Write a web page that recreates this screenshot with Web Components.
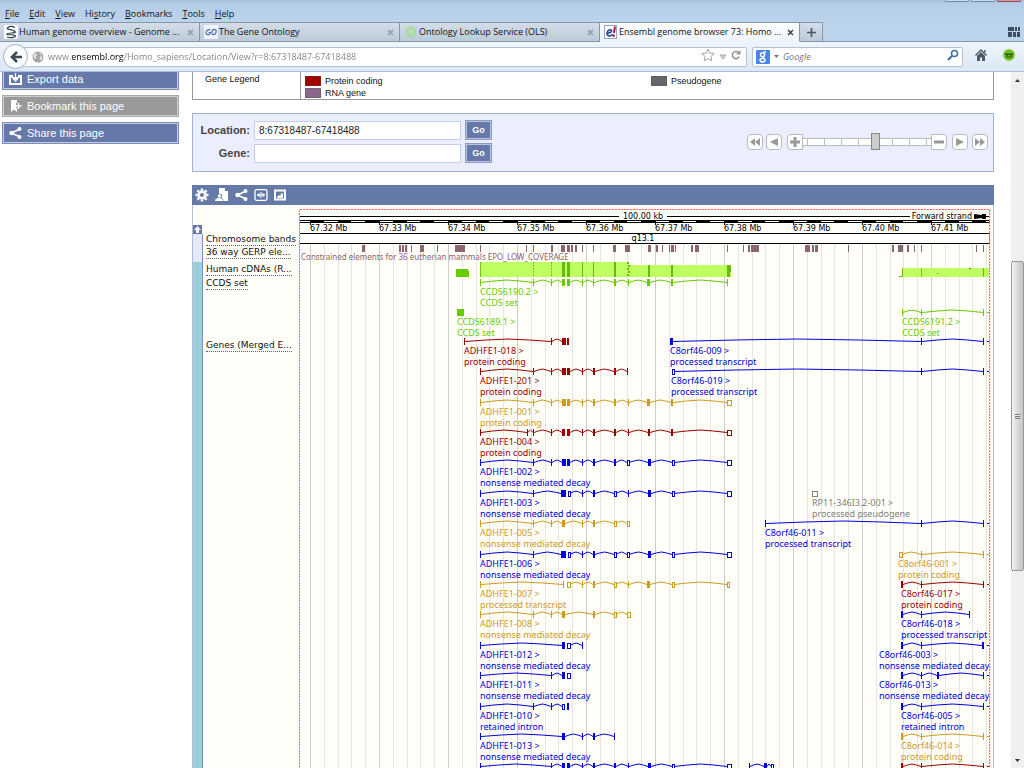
<!DOCTYPE html>
<html lang="en">
<head>
<meta charset="utf-8">
<title>Ensembl genome browser 73: Homo sapiens</title>
<style>
html,body{margin:0;height:100%;overflow:hidden;background:#fff;font-family:"Open Sans","Noto Sans",sans-serif}
</style>
</head>
<body>
<browser-window>
  <menu-bar slot="chrome"></menu-bar>
  <tab-strip slot="chrome">
    <browser-tab icon="genome">Human genome overview - Genome ...</browser-tab>
    <browser-tab icon="go">The Gene Ontology</browser-tab>
    <browser-tab icon="ols">Ontology Lookup Service (OLS)</browser-tab>
    <browser-tab icon="ensembl" active>Ensembl genome browser 73: Homo ...</browser-tab>
  </tab-strip>
  <nav-bar slot="chrome"></nav-bar>
  <ensembl-page></ensembl-page>
</browser-window>
<script>
const ICONS = {
  genome:'<svg viewBox="0 0 14 14" width="14" height="14"><rect width="14" height="14" rx="1" fill="#fff"/><path d="M11 2.500C8 1 5 1.500 3.500 3S9 4.500 11 6.500 4 7.500 3 9s6 0 8 1.500-4 3-8 1.500" fill="none" stroke="#2b3a4a" stroke-width="1.200"/></svg>',
  go:'<svg viewBox="0 0 14 14" width="14" height="14"><rect width="14" height="14" fill="#eef3fb"/><g fill="none" stroke="#4b6fae" stroke-width="1.200"><path d="M6.500 5C4 3.500 2 6 2 8c0 2 3 2 4 .8L6.300 7.500H4.500"/><ellipse cx="10" cy="7" rx="2" ry="2.700" transform="rotate(20 10 7)"/></g></svg>',
  ols:'<svg viewBox="0 0 14 14" width="14" height="14"><path d="M5 1h4v1.500L12 4v6l-3 1.500V13H5v-1.500L1.500 10V4L5 2.500z" fill="#a9d9a4"/><path d="M4 7h6M7 4v6" stroke="#c3e6bf"/></svg>',
  ensembl:'<svg viewBox="0 0 14 14" width="14" height="14"><rect x=".5" y=".5" width="12" height="13" fill="#fff" stroke="#99a6bb"/><path d="M3.500 8C6 8 8 7 7.500 5.300 7 4 3 5 3 8.500c0 3 4 3 6 .8" fill="none" stroke="#2c4f9a" stroke-width="1.700"/><path d="M11 1.500L10 8" stroke="#b01c3c" stroke-width="2"/><circle cx="9.800" cy="10.800" r="1.200" fill="#b01c3c"/></svg>',
  close:'<svg viewBox="0 0 7 7" width="7" height="7"><path d="M1 1l5 5M6 1L1 6" stroke="currentColor" stroke-width="1.300"/></svg>',
  plus:'<svg viewBox="0 0 9 9" width="9" height="9"><path d="M4.500 0v9M0 4.500h9" stroke="#4a5561" stroke-width="1.600"/></svg>',
  groups:'<svg viewBox="0 0 12 12" width="12" height="12"><path d="M0 1h6v4H0zM7 1h2v4H7zM10 1h2v4h-2zM0 6h4v5H0zM5 6h3v5H5zM9 6h3v5H9z" fill="#3e4e60"/></svg>',
  back:'<svg viewBox="0 0 14 14" width="14" height="14"><path d="M8 2L3 7l5 5M3 7h10" fill="none" stroke="#3f4a57" stroke-width="2.600"/></svg>',
  globe:'<svg viewBox="0 0 12 12" width="12" height="12"><circle cx="6" cy="6" r="5.500" fill="#a6a6a6"/><path d="M2 3c2-2 3 0 3 1S3 5 4 7 2 8 1.500 6zM7 2c3 0 3 2 2 3S7 8 8 9 10 8 10.500 6" fill="#e3e3e3"/></svg>',
  star:'<svg viewBox="0 0 14 14" width="14" height="14"><path d="M7 1l1.800 4.100 4.500.4-3.400 3 1 4.400L7 10.600 3.100 12.900l1-4.400-3.400-3 4.500-.4z" fill="#fff" stroke="#a5a5a5"/></svg>',
  tri:'<svg viewBox="0 0 8 6" width="8" height="6"><path d="M1 1h6L4 5z" fill="#d6d6d6" stroke="#aaa"/></svg>',
  reload:'<svg viewBox="0 0 10 10" width="10" height="10"><path d="M8.200 6.500A3.600 3.600 0 1 1 7.500 2.500" fill="none" stroke="#8d949b" stroke-width="1.500"/><path d="M9.500 0v4.500H5z" fill="#8d949b"/></svg>',
  google:'<svg viewBox="0 0 14 14" width="14" height="14"><rect width="14" height="14" rx="1" fill="#4a86e8"/><g fill="none" stroke="#fff" stroke-width="1.500"><circle cx="6.600" cy="4.700" r="2"/><path d="M7.600 2H10M7 7c0 1 2 1.200 2 3 0 2.500-5 2.500-5 .2C4 8.700 6 8.500 7.500 8.500"/></g></svg>',
  caret:'<svg viewBox="0 0 5 3" width="5" height="3"><path d="M0 0h5L2.500 3z" fill="#777"/></svg>',
  search:'<svg viewBox="0 0 12 12" width="12" height="12"><circle cx="7.500" cy="4.500" r="3" fill="none" stroke="#3d6ea5" stroke-width="1.500"/><path d="M5.200 6.800L1 11" stroke="#3d6ea5" stroke-width="2"/></svg>',
  home:'<svg viewBox="0 0 12 12" width="12" height="12"><path d="M6 0l6 6-1 1-5-5-5 5-1-1zM9 1h1.500v3L9 2.500zM2 7l4-4 4 4v5H7V8.500H5V12H2z" fill="#4b5866"/></svg>',
  monster:'<svg viewBox="0 0 12 12" width="12" height="12"><circle cx="6" cy="6" r="5.800" fill="#6fbd1c"/><g stroke="#1e3a0a" fill="none"><path d="M2 4.500l2 1.500 2-1 2 1 2-1.500M3 8.500l1.500-1L6 8.500l1.500-1L9 8.500"/></g><circle cx="4" cy="5.500" r="1" fill="#1e3a0a"/><circle cx="8" cy="5.500" r="1" fill="#1e3a0a"/></svg>',
  export:'<svg viewBox="0 0 13 12" width="13" height="12"><path d="M4 3H1v8h11V3H9" fill="none" stroke="#fff" stroke-width="2"/><path d="M6.500 0v5M3.500 4.500h6L6.500 8z" fill="#fff" stroke="#fff" stroke-width="1.200"/></svg>',
  bookmark:'<svg viewBox="0 0 13 12" width="13" height="12"><path d="M2 0h6v3H7v5h1v4L5 9.500 2 12z" fill="#fff"/><path d="M9.500 3v6M6.500 6h6" stroke="#fff" stroke-width="1.500"/></svg>',
  share:'<svg viewBox="0 0 13 12" width="13" height="12"><path d="M11 2L2.500 6 11 10" fill="none" stroke="#fff" stroke-width="1.600"/><circle cx="10.500" cy="2" r="2" fill="#fff"/><circle cx="2.500" cy="6" r="2.200" fill="#fff"/><circle cx="10.500" cy="10" r="2" fill="#fff"/></svg>',
  gear:'<svg viewBox="0 0 14 14" width="14" height="14"><circle cx="7" cy="7" r="3.400" fill="none" stroke="#fff" stroke-width="2.600"/><path d="M7 .5v2M7 11.500v2M.5 7h2M11.500 7h2M2.400 2.400l1.500 1.500M10.100 10.100l1.500 1.500M2.400 11.600l1.500-1.500M10.100 3.900l1.500-1.500" stroke="#fff" stroke-width="2.400"/></svg>',
  user:'<svg viewBox="0 0 14 14" width="14" height="14"><path d="M4 0h6l3 3v10H8.500c0-2-1-2.500-2-3 1.500-2 .5-4-1-4.200H4zM10 0v3h3" fill="#fff"/><circle cx="4.500" cy="8" r="1.800" fill="#fff"/><path d="M0 13c0-3 3-3 4.500-3S8 11 8 13z" fill="#fff"/></svg>',
  resize:'<svg viewBox="0 0 14 14" width="14" height="14"><rect x="1" y="1.700" width="12" height="10.600" rx="1.500" fill="none" stroke="#fff" stroke-width="1.300"/><path d="M7 4v6M3 7h8" stroke="#fff"/><path d="M3 7l2.500-2.200v4.400zM11 7L8.500 4.800v4.400z" fill="#fff"/></svg>',
  image:'<svg viewBox="0 0 12 12" width="12" height="12"><rect x="1" y="1.500" width="10" height="9" fill="none" stroke="#fff" stroke-width="2"/><path d="M3 8l2-2 1 1 1.500-3L9 5v4H3z" fill="#fff"/></svg>'
};
const define = (name, css, html, extra) => {
  const t = document.createElement('template');
  t.innerHTML = `<style>*{box-sizing:border-box}button{font:inherit;border:0;padding:0;background:none;color:inherit}${css}</style>${html}`;
  customElements.define(name, class extends HTMLElement {
    constructor(){ super(); this.attachShadow({mode:'open'}).append(t.content.cloneNode(true)); }
    connectedCallback(){ if (extra) extra(this, this.shadowRoot); }
  });
};
define('ui-icon', ':host{display:inline-flex;flex:none}svg{display:block}', '', (el, root) => {
  root.innerHTML = '<style>:host{display:inline-flex;flex:none}svg{display:block}</style>' + (ICONS[el.getAttribute('name')] || '');
});

define('menu-bar', `
:host{display:block;background:linear-gradient(#b3cde7,#bcd3ec)}
.title{display:flex;justify-content:flex-end;gap:2px;height:5px;padding-right:3px;background:linear-gradient(#a3bfdc,#b8d0ea)}
.title i{width:24px;height:2px;border:1px solid #7488a0;border-top:0;border-radius:0 0 3px 3px;background:#cfdeee}
.title i:last-child{background:#d9969a;border-color:#8b4b52}
nav{display:flex;gap:10px;height:17px;padding-left:5px;align-items:center;font-size:9px;line-height:16px;color:#111}
`, `<div class="title"><i></i><i></i><i></i></div>
<nav aria-label="Menu"><button><u>F</u>ile</button><button><u>E</u>dit</button><button><u>V</u>iew</button><button>Hi<u>s</u>tory</button><button><u>B</u>ookmarks</button><button><u>T</u>ools</button><button><u>H</u>elp</button></nav>`);

define('browser-tab', `
:host{display:flex;align-items:center;flex:0 1 200px;min-width:0;height:20px;padding:0 5px 0 4px;gap:1px;background:linear-gradient(#d2dde8,#bccad9);border:1px solid #8796a8;border-width:1px 1px 1px 0;font-size:9px;color:#111;box-sizing:border-box}
:host([active]){background:linear-gradient(#fdfeff,#eef4fb);border-bottom-color:#eef4fb}
.t{flex:1;text-align:left;display:flex;align-items:center;gap:1px;white-space:nowrap;overflow:hidden;line-height:16px}
.x{color:#8b97a4}:host([active]) .x{color:#333}
`, `<button class="t" role="tab"><ui-icon></ui-icon><span><slot></slot></span></button><button class="x" aria-label="Close tab"><ui-icon name="close"></ui-icon></button>`,
(el, root) => { const i = root.querySelector('ui-icon'); i.setAttribute('name', el.getAttribute('icon')); i.replaceWith(i.cloneNode()); });

define('tab-strip', `
:host{display:flex;height:20px;background:#bcd3ec;box-shadow:inset 0 -1px #8796a8}
.new{width:23px;background:linear-gradient(#d2dde8,#bccad9);border:1px solid #8796a8;border-left:0;display:flex;align-items:center;justify-content:center}
.all{margin-left:auto;padding-right:4px;display:flex;align-items:center}
`, `<slot></slot><button class="new" aria-label="New tab"><ui-icon name="plus"></ui-icon></button><button class="all" aria-label="Tab groups"><ui-icon name="groups"></ui-icon></button>`);

define('nav-bar', `
:host{display:flex;align-items:center;height:30px;background:linear-gradient(#eef4fb,#dce8f6);border-bottom:1px solid #a9bfd8;padding-left:3px;font-size:9px;box-sizing:border-box}
.back{width:25px;height:25px;border:1px solid #9fb0c3;border-radius:50%;background:#fbfdff;display:flex;align-items:center;justify-content:center;z-index:1}
.box{display:flex;align-items:center;height:20px;background:#fff;border:1px solid #b4c3d4;border-radius:2px}
.url{flex:1;margin-left:-6px;padding:0 5px 0 9px;gap:4px}
input{font:inherit;border:0;padding:0;outline:0;height:18px}
.url input{flex:1;min-width:0;background:linear-gradient(90deg,#808080 24px,#000 24px,#000 76px,#808080 76px);-webkit-background-clip:text;background-clip:text;color:transparent;-webkit-text-fill-color:transparent}
.find{flex:0 1 211px;margin-left:5px;padding:0 3px;gap:4px}
.find input{flex:1;min-width:0;font-style:italic}
.find input::placeholder{color:#777}
.home{margin-left:12px}.mon{margin:0 9px 0 16px}
`, `<button class="back" aria-label="Back"><ui-icon name="back"></ui-icon></button>
<div class="box url"><ui-icon name="globe"></ui-icon><input aria-label="Address" value="www.ensembl.org/Homo_sapiens/Location/View?r=8:67318487-67418488"><button aria-label="Bookmark"><ui-icon name="star"></ui-icon></button><button aria-label="History"><ui-icon name="tri"></ui-icon></button><button aria-label="Reload"><ui-icon name="reload"></ui-icon></button></div>
<div class="box find"><ui-icon name="google"></ui-icon><ui-icon name="caret"></ui-icon><input aria-label="Search" placeholder="Google"><button aria-label="Go"><ui-icon name="search"></ui-icon></button></div>
<button class="home" aria-label="Home"><ui-icon name="home"></ui-icon></button><button class="mon" aria-label="Add-on"><ui-icon name="monster"></ui-icon></button>`);

define('page-scrollbar', `
:host{display:flex;flex-direction:column;width:13px;flex:none;background:#f0f0f1}
.a{height:16px;flex:none;display:flex;align-items:center;justify-content:center}
.up{flex:174}.down{flex:182}
.thumb{flex:308;border:1px solid #979797;border-radius:2px;background:linear-gradient(90deg,#f4f4f4,#dadadb 50%,#c3c4c6);display:flex;align-items:center;justify-content:center}
.grip{width:5px;height:5px;border:solid #777;border-width:1px 0;box-shadow:inset 0 1px #e8e8e8,inset 0 2px #777}
svg{display:block}
`, `<div class="a"><svg width="5" height="3"><path d="M0 3h5L2.500 0z" fill="#333"/></svg></div><div class="up"></div><div class="thumb"><div class="grip"></div></div><div class="down"></div><div class="a"><svg width="5" height="3"><path d="M0 0h5L2.500 3z" fill="#333"/></svg></div>`);

define('browser-window', `
:host{display:flex;flex-direction:column;height:100vh;overflow:hidden}
.view{flex:1;min-height:0;display:flex}
main{flex:1;min-width:0;overflow:hidden}
`, `<slot name="chrome"></slot><div class="view"><main><slot></slot></main><page-scrollbar></page-scrollbar></div>`);

define('tool-button', `
:host{display:block}
button{display:flex;align-items:center;gap:5px;width:100%;height:22px;padding-left:6px;background:#6679a8;border:1px solid #7d8db5;box-shadow:inset 0 0 0 1px #c4cce0;color:#fff;font:11px/16px "Liberation Sans",Arial,sans-serif;text-align:left}
:host([disabled]) button{background:#999;border-color:#aaa;box-shadow:inset 0 0 0 1px #ccc}
`, `<button><ui-icon></ui-icon><span><slot></slot></span></button>`,
(el, root) => { const i = root.querySelector('ui-icon'); i.setAttribute('name', el.getAttribute('icon')); i.replaceWith(i.cloneNode()); });

define('gene-legend', `
:host{display:grid;grid-template-columns:108px 1fr 1fr;height:32px;border:1px solid #999;background:#fff;font:9px/12px "Liberation Sans",Arial,sans-serif;color:#111;box-sizing:border-box}
.h{border-right:1px solid #999;padding:4px 0 0 12px}
.c{padding:6px 0 0 4px}
p{margin:0;display:flex;align-items:center;gap:4px}
i{width:16px;height:10px;border:1px solid #5555}
`, `<div class="h">Gene Legend</div><div class="c"><p><i style="background:#a00000"></i>Protein coding</p><p><i style="background:#8b668b"></i>RNA gene</p></div><div class="c"><p><i style="background:#666"></i>Pseudogene</p></div>`);

define('zoom-ramp', `
:host{display:flex;align-items:center}
button{width:16px;height:16px;border:1px solid #bbb;border-radius:4px;background:#fff;display:flex;align-items:center;justify-content:center;flex:none}
.a{margin-right:3px}.b{margin-left:4px}
.p{margin-left:2px;border-radius:4px 0 0 4px}.m{border-radius:0 4px 4px 0}
.m + .b{margin-left:5px}
input{-webkit-appearance:none;appearance:none;margin:0;width:128px;height:18px;background:linear-gradient(#bbb,#bbb) 0 5px/100% 1px no-repeat,linear-gradient(#bbb,#bbb) 0 12px/100% 1px no-repeat,repeating-linear-gradient(90deg,#fff0 0 4px,#bbb 4px 5px,#fff0 5px 17px) 0 5px/100% 8px no-repeat,linear-gradient(#fff,#fff) 0 5px/100% 8px no-repeat}
input::-webkit-slider-thumb{-webkit-appearance:none;width:9px;height:17px;background:#ccc;border:1px solid #888}
svg{display:block}
`, `<button class="a" aria-label="Far left"><svg width="10" height="8"><path d="M5 0v8L0 4zM10 0v8L5 4z" fill="#999"/></svg></button>
<button class="a" aria-label="Left"><svg width="8" height="8"><path d="M8 0v8L0 4z" fill="#999"/></svg></button>
<button class="p" aria-label="Zoom in"><svg width="10" height="10"><path d="M5 0v10M0 5h10" stroke="#999" stroke-width="3"/></svg></button>
<input type="range" min="0" max="100" value="57" aria-label="Zoom">
<button class="m" aria-label="Zoom out"><svg width="10" height="10"><path d="M0 5h10" stroke="#999" stroke-width="3"/></svg></button>
<button class="b" aria-label="Right"><svg width="8" height="8"><path d="M0 0v8l8-4z" fill="#999"/></svg></button>
<button class="b" aria-label="Far right"><svg width="10" height="8"><path d="M0 0v8l5-4zM5 0v8l5-4z" fill="#999"/></svg></button>`);

define('location-form', `
:host{display:flex;align-items:center;justify-content:space-between;height:59px;padding:0 5px 2px 8px;background:#eaeeff;border:1px solid #a1b0d4;font:bold 11px/16px "Liberation Sans",Arial,sans-serif;color:#444;box-sizing:border-box}
form{display:grid;grid-template-columns:49px 207px 27px;gap:3px 4px;align-items:center}
label{text-align:right;white-space:nowrap;justify-self:end}
input{width:100%;min-width:0;height:19px;border:1px solid #c3cdee;background:#fff;padding:0 4px;font:10px "Liberation Sans",Arial,sans-serif;color:#222;outline:0}
form button{width:27px;height:20px;border:1px solid #8c9bc4;background:#6679a8;box-shadow:inset 0 0 0 1px #b9c3df;color:#fff;font:bold 9px/14px "Liberation Sans",Arial,sans-serif}
`, `<form><label for="l">Location:</label><input id="l" value="8:67318487-67418488"><button type="button">Go</button><label for="g">Gene:</label><input id="g"><button type="button">Go</button></form><zoom-ramp></zoom-ramp>`);

/* Transcripts: glyph y, colour, exons "x:width" (o = hollow box, > = runs off the edge), label x, name, biotype */
const RED='#990000', GOLD='#cd9b1d', BLUE='#0000dd', GREEN='#66cc00', GREY='#808080';
const TRANSCRIPTS = [
 [282,GREEN,'480 533 551 562:3 567:3 582 593:1 614:2 628 647:3 671:2 727',480,'CCDS6190.2','CCDS set'],
 [312,GREEN,'457:7',457,'CCDS6189.1','CCDS set'],
 [312,GREEN,'902 921 983 >',902,'CCDS6191.2','CCDS set'],
 [341,RED,'464 551 562:4 567:2',464,'ADHFE1-018','protein coding'],
 [341,BLUE,'670:3 921 983 >',670,'C8orf46-009','processed transcript'],
 [371,RED,'480 533 551 562:4 567:3 582 593:2 614:2 627',480,'ADHFE1-201','protein coding'],
 [371,BLUE,'672:2o 921 983 >',671,'C8orf46-019','processed transcript'],
 [402,GOLD,'480 533 551 562:4 567:3 582 593:2 614:2 628 647:3 671:2 727:4o',480,'ADHFE1-001','protein coding'],
 [432,RED,'480 527 533 551 562:3 567:3 582 593:2 614:2 628 648:2 671:2 727:4o',480,'ADHFE1-004','protein coding'],
 [462,BLUE,'480 533 551 562:4 567:3 582 593:2 614:2 627:2o 648:3 672:2o 727:4o',480,'ADHFE1-002','nonsense mediated decay'],
 [493,BLUE,'480 533 561:5 568:2o 582 593:2 614:2o 628 648:3 672:2o 727:4o',480,'ADHFE1-003','nonsense mediated decay'],
 [493,GREY,'812:5o',812,'RP11-346I3.2-001','processed pseudogene'],
 [523,GOLD,'480 533 551 562:3 582 593:2 614:2o 627:2o',480,'ADHFE1-005','nonsense mediated decay'],
 [523,BLUE,'765 921 983 >',765,'C8orf46-011','processed transcript'],
 [554,BLUE,'480 533 561:5 568:2o 582 593:2 614:2o 627:2o 648:3 672:2o 727:4o',480,'ADHFE1-006','nonsense mediated decay'],
 [554,GOLD,'899:3o 921 983 >',898,'C8orf46-001','protein coding'],
 [584,GOLD,'480 563 567:3o 582 593:2 614:2o 628 647:3 672:2o 727:2o',480,'ADHFE1-007','processed transcript'],
 [584,RED,'901:2 921 983 >',901,'C8orf46-017','protein coding'],
 [614,GOLD,'480 533 551 562:3 593:2 614:2o 627:3o',480,'ADHFE1-008','nonsense mediated decay'],
 [614,BLUE,'901:2 921 969',901,'C8orf46-018','processed transcript'],
 [645,BLUE,'480 562:3 567:3o 582',480,'ADHFE1-012','nonsense mediated decay'],
 [645,BLUE,'901:2 921 982:2 >',879,'C8orf46-003','nonsense mediated decay'],
 [675,BLUE,'480 551 562:3 567:3o',480,'ADHFE1-011','nonsense mediated decay'],
 [675,BLUE,'901:2 921 937:2 983 >',879,'C8orf46-013','nonsense mediated decay'],
 [706,BLUE,'480 533 551 562:2o 567:2',480,'ADHFE1-010','retained intron'],
 [706,BLUE,'901:2 921 983 >',901,'C8orf46-005','retained intron'],
 [736,BLUE,'480 562:3 582 593:2 614',480,'ADHFE1-013','nonsense mediated decay'],
 [736,GOLD,'901:2 921 983 >',901,'C8orf46-014','protein coding'],
 [766,BLUE,'480 551 562:3 567:3 582 593:2 614:2 628 648:3 672:2o 727:4o'],
 [766,BLUE,'749 764:3 771:2o'],
 [766,RED,'901:2 921 983 >']
];
const GERP = '362:3 399:2 402:2 405:2 411:1 420:4 437:1 455:10 480:1 526:1 533:1 551:2 561:4 567:3 571:2 575:2 582:1 593:1 613:3 625:5 648:3 656:2 662:1 669:1 671:3 675:1 691:2 695:4 727:1 743:1 748:2 751:8 805:5 812:2 815:3 848:1 892:2 898:5 907:2 914:1 921:1 976:1 983:1';
const box = (x,y,w,h,f,s='') => `<rect x="${x}" y="${y}" width="${w}" height="${h}" fill="${f}"${s?` stroke="${s}"`:''}/>`;

function glyph([y,c,spec,lx,name,type]){
  let out = '', prev = null;
  for (const part of spec.split(' ')) {
    if (part === '>') { out += box(prev+3, y, 2, 1, c); continue; }
    const [xs,ws='1'] = part.split(':'), x = +xs, w = parseInt(ws);
    if (prev !== null && x > prev + 3) {
      const q = (x-prev)*.25;
      out += `<path d="M${prev} ${y+.5}L${prev+q} ${y-1}Q${(prev+x)/2} ${y-3} ${x-q} ${y-1}L${x} ${y+.5}" fill="none" stroke="${c}"/>`;
    }
    out += ws.endsWith('o') ? box(x+.5, y-1.5, w, 5, '#fffef8', c) : box(x, y-3, w, 7, c);
    prev = x + w;
  }
  if (name) out += `<text x="${lx}" y="${y+13}" fill="${c}">${name} &gt;</text><text x="${lx}" y="${y+24}" fill="${c}">${type}</text>`;
  return out;
}
function drawRegion(){
  const step = 13.8, x0 = 310;
  let s = '<g shape-rendering="crispEdges">';
  for (let i=0;i<50;i++) s += box(Math.round(x0+i*step),244,1,540, i%5 ? '#e4e4e0' : '#cccccc');
  s += box(299,216,320,1,'#000') + box(667,216,243,1,'#000') + box(299,216,1,8,'#000') + box(299,220,691,3,'#000');
  for (let i=-1;i<50;i+=2) { const a = Math.max(300,Math.round(x0+i*step)), b = Math.min(989,Math.round(x0+(i+1)*step)); s += box(a,221,b-a,1,'#fff'); }
  for (let i=0;i<10;i++) s += box(Math.round(x0+i*5*step),221,1,4,'#000');
  s += box(299.5,233.5,690,10,'#fff','#000');
  for (const g of GERP.split(' ')) { const [x,w]=g.split(':'); s += box(x,245,w,7,'#8b6670'); }
  s += box(456,269,12,8,GREEN)+box(466,271,3,6,GREEN);
  s += box(480,262,149,15,'#c0ff60')+box(629,265,102,12,'#c0ff60')+box(902,268,87,9,'#c0ff60');
  s += box(480,262,1,15,'#74c81a');
  for (const [x,w] of [[562,3],[567,3],[582,1],[593,1],[614,2]]) s += box(x,262,w,15,'#66bb10');
  for (const [x,w] of [[648,2],[671,2],[727,3]]) s += box(x,265,w,12,'#66bb10');
  for (let y=262;y<277;y+=3) s += box(533,y,1,2,'#74c81a')+box(551,y,1,2,'#74c81a')+box(627+(y%2),y,2,2,'#66bb10');
  s += box(729,266,2,6,'#66bb10')+box(902,268,1,9,'#66bb10')+box(899,276,3,1,'#66bb10')+box(921,268,1,9,'#74c81a')+box(983,268,1,9,'#66bb10')+box(937,273,1,1,'#393')+box(969,268,2,1,'#393');
  s += '</g><path d="M974 214l8 1v-1h4v5h-4v-1l-8 1z"/><path d="M985 216.500h4" stroke="#000"/>';
  s += '<g class="ax">';
  for (let i=0;i<10;i++) s += `<text x="${Math.round(x0+i*5*step)}" y="231">67.${32+i} Mb</text>`;
  s += '<text x="643" y="219" text-anchor="middle">100.00 kb</text><text x="643" y="241" text-anchor="middle">q13.1</text><text x="972" y="219" text-anchor="end">Forward strand</text></g>';
  s += '<text x="301" y="260" class="ce" fill="#8b6670">Constrained elements for 36 eutherian mammals EPO_LOW_COVERAGE</text>';
  s += TRANSCRIPTS.map(glyph).join('');
  s += '<g fill="none"><path d="M299.500 800V209.500H990V800" stroke="#ffd0d0"/><path d="M299.500 800V209.500H989.500V800" stroke="#ff7070" stroke-dasharray="2 1"/></g>';
  return s;
}
define('region-view', `
:host{display:block}
svg{display:block;width:100%;font:9px "Noto Sans",sans-serif}
.ax{font:8px "DejaVu Sans",sans-serif}
.ce{font-size:8px}
`, `<svg viewBox="299 205 692 580" role="img" aria-label="Region in detail">${drawRegion()}</svg>`);

define('track-list', `
:host{display:block;padding-top:20px;font:9px/12px "DejaVu Sans",Verdana,sans-serif}
.up{display:flex;width:9px;height:9px;background:#667aa8;align-items:center;justify-content:center}
ul{margin:0;padding:0;list-style:none}
li{display:flex;gap:3px;height:var(--h);align-items:flex-start}
li::before{content:"";width:9px;height:100%;background:var(--c);border:1px solid #7d92b8;border-width:0 1px 1px 0;flex:none}
a{color:#111;text-decoration:none;border-bottom:1px dotted #567;white-space:nowrap;line-height:11px}
.d a{margin-top:2px}
`, `<button class="up" aria-label="Move up"><svg width="7" height="7"><path d="M3.500 0L7 4H5v3H2V4H0z" fill="#fff"/></svg></button>
<ul><li style="--h:11px;--c:#e6e9fb"><a href="#">Chromosome bands</a></li><li class="d" style="--h:17px;--c:#e6e9fb"><a href="#">36 way GERP ele...</a></li><li class="d" style="--h:16px;--c:#9ccfdb"><a href="#">Human cDNAs (R...</a></li><li style="--h:60px;--c:#9ccfdb"><a href="#">CCDS set</a></li><li class="d" style="--h:460px;--c:#9ccfdb"><a href="#">Genes (Merged E...</a></li></ul>`);

define('region-panel', `
:host{display:block}
.bar{display:flex;align-items:center;gap:6px;height:20px;padding-left:3px;background:#667aa8}
.bar button{display:flex}
.body{display:grid;grid-template-columns:106px 1fr;padding-right:2px;border:1px solid #b1bcd8;border-width:0 1px;background:#fffef8}
`, `<div class="bar"><button aria-label="Configure"><ui-icon name="gear"></ui-icon></button><button aria-label="Your data"><ui-icon name="user"></ui-icon></button><button aria-label="Share"><ui-icon name="share"></ui-icon></button><button aria-label="Resize"><ui-icon name="resize"></ui-icon></button><button aria-label="Export image"><ui-icon name="image"></ui-icon></button></div>
<div class="body"><track-list></track-list><region-view></region-view></div>`);

define('ensembl-page', `
:host{display:flex;margin-top:-4px}
aside{width:177px;margin:0 13px 0 2px;flex:none;display:flex;flex-direction:column;gap:5px}
section{flex:1;min-width:0;margin-right:17px;display:flex;flex-direction:column;gap:13px}
`, `<aside><tool-button icon="export">Export data</tool-button><tool-button icon="bookmark" disabled>Bookmark this page</tool-button><tool-button icon="share">Share this page</tool-button></aside>
<section><gene-legend></gene-legend><location-form></location-form><region-panel></region-panel></section>`);
</script>
</body>
</html>
